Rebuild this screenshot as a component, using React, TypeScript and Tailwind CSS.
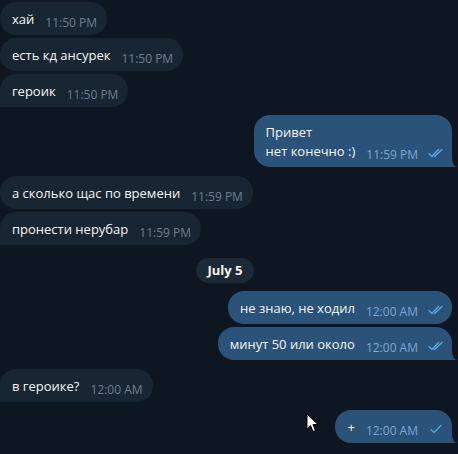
import React from "react";

type Msg = {
  out: boolean;
  lines: string[];
  time: string;
  checks?: 1 | 2;
  tail?: boolean;
  gap: number;
};

const msgs: Msg[] = [
  { out: false, lines: ["хай"], time: "11:50 PM", gap: 2 },
  { out: false, lines: ["есть кд ансурек"], time: "11:50 PM", gap: 3 },
  { out: false, lines: ["героик"], time: "11:50 PM", gap: 3, tail: true },
  { out: true, lines: ["Привет", "нет конечно :)"], time: "11:59 PM", checks: 2, gap: 8, tail: true },
  { out: false, lines: ["а сколько щас по времени"], time: "11:59 PM", gap: 9 },
  { out: false, lines: ["пронести нерубар"], time: "11:59 PM", gap: 3, tail: true },
];

const msgs2: Msg[] = [
  { out: true, lines: ["не знаю, не ходил"], time: "12:00 AM", checks: 2, gap: 8 },
  { out: true, lines: ["минут 50 или около"], time: "12:00 AM", checks: 2, gap: 3, tail: true },
  { out: false, lines: ["в героике?"], time: "12:00 AM", gap: 9, tail: true },
  { out: true, lines: ["+"], time: "12:00 AM", checks: 1, gap: 8, tail: true },
];

function Checks({ n }: { n: 1 | 2 }) {
  return (
    <svg width="16" height="10" viewBox="0 0 16 10" fill="none" className="ml-[10px] mb-[3px] text-[#5aa7e4]">
      {n === 2 ? (
        <>
          <path d="M1 5.5 L4 8.5 L10.5 1.5" stroke="currentColor" strokeWidth="1.4" strokeLinecap="round" strokeLinejoin="round" />
          <path d="M6.5 8.5 L14 1.5" stroke="currentColor" strokeWidth="1.4" strokeLinecap="round" />
        </>
      ) : (
        <path d="M3 5.5 L6 8.5 L13 1.5" stroke="currentColor" strokeWidth="1.4" strokeLinecap="round" strokeLinejoin="round" />
      )}
    </svg>
  );
}

function Bubble({ m }: { m: Msg }) {
  const style = { marginTop: m.gap };
  if (m.out) {
    return (
      <div className="flex justify-end pr-[6px]" style={style}>
        <div
          className={
            "relative flex items-end bg-[#2b5278] rounded-[16px] pl-3 pr-[8px] pt-2 pb-[6px] " +
            (m.tail ? "rounded-br-none" : "")
          }
        >
          <div className="text-[13px] leading-[19px] text-[#f5f5f5]">
            {m.lines.map((l, i) => (
              <div key={i}>{l}</div>
            ))}
          </div>
          <span className="ml-[11px] text-[12px] leading-[14px] text-[#7da8d3] translate-y-[1px]">{m.time}</span>
          {m.checks && <Checks n={m.checks} />}
          {m.tail && (
            <svg width="6" height="10" viewBox="0 0 6 10" className="absolute -right-[6px] bottom-0">
              <path d="M0 0 Q0 10 6 10 L0 10 Z" fill="#2b5278" />
            </svg>
          )}
        </div>
      </div>
    );
  }
  return (
    <div className="flex justify-start" style={style}>
      <div
        className={
          "flex items-end bg-[#182533] rounded-[16px] pl-3 pr-[10px] pt-2 pb-[6px] " +
          (m.tail ? "rounded-bl-none" : "")
        }
      >
        <div className="text-[13px] leading-[19px] text-[#f5f5f5]">
          {m.lines.map((l, i) => (
            <div key={i}>{l}</div>
          ))}
        </div>
        <span className="ml-[11px] text-[12px] leading-[14px] text-[#6d7f8f] translate-y-[1px]">{m.time}</span>
      </div>
    </div>
  );
}

export default function App() {
  return (
    <div className="relative w-[458px] h-[454px] overflow-hidden bg-[#0e1621] font-['Open_Sans',sans-serif]">
      <div className="flex flex-col">
        {msgs.map((m, i) => (
          <Bubble key={i} m={m} />
        ))}
        <div className="flex justify-center pr-[8px] mt-[13px]">
          <div className="h-[25px] px-[11px] rounded-full bg-[#1c2a38] text-[13px] font-bold text-[#f5f5f5] flex items-center">
            July 5
          </div>
        </div>
        {msgs2.map((m, i) => (
          <Bubble key={i} m={m} />
        ))}
      </div>
      {/* mouse pointer */}
      <svg width="14" height="21" viewBox="0 0 14 21" className="absolute left-[306px] top-[413px]">
        <path d="M1 1 L1 16 L4.5 12.5 L7 18.5 L9.5 17.5 L7 11.5 L12 11.5 Z" fill="#fff" stroke="#000" strokeWidth="1" strokeLinejoin="round" />
      </svg>
    </div>
  );
}
